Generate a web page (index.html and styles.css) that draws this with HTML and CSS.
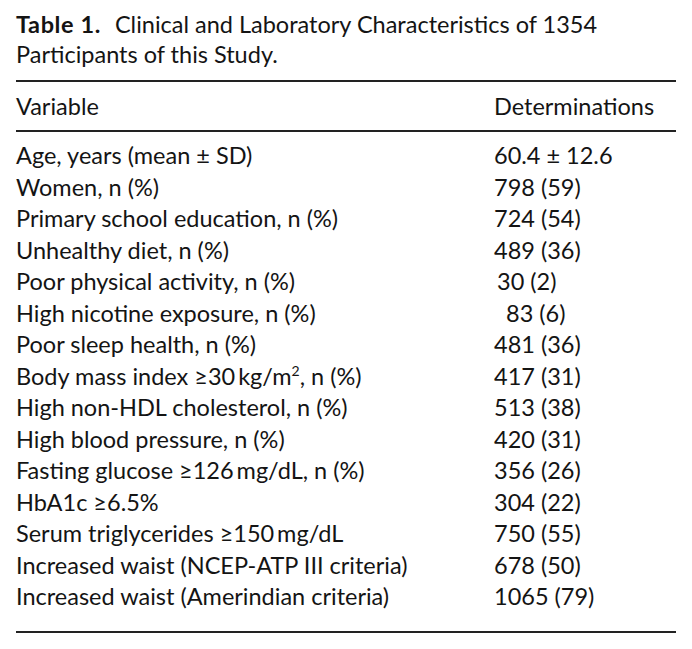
FILE: index.html
```html
<!DOCTYPE html>
<html>
<head>
<meta charset="utf-8">
<link rel="stylesheet" href="styles.css">
</head>
<body>
<div class="page">
  <div class="caption">
    <div class="cap-line"><b class="label">Table 1.</b><span>Clinical and Laboratory Characteristics of 1354</span></div>
    <div class="cap-line">Participants of this Study.</div>
  </div>
  <div class="head">
    <span>Variable</span>
    <span class="val">Determinations</span>
  </div>
  <div class="rows">
    <div class="row"><span>Age, years (mean ± SD)</span><span class="val">60.4 ± 12.6</span></div>
    <div class="row"><span>Women, n (%)</span><span class="val">798 (59)</span></div>
    <div class="row"><span>Primary school education, n (%)</span><span class="val">724 (54)</span></div>
    <div class="row"><span>Unhealthy diet, n (%)</span><span class="val">489 (36)</span></div>
    <div class="row"><span>Poor physical activity, n (%)</span><span class="val val-pad-s">30 (2)</span></div>
    <div class="row"><span>High nicotine exposure, n (%)</span><span class="val val-pad-l">83 (6)</span></div>
    <div class="row"><span>Poor sleep health, n (%)</span><span class="val">481 (36)</span></div>
    <div class="row"><span>Body mass index ≥30&#8201;kg/m<sup>2</sup>, n (%)</span><span class="val">417 (31)</span></div>
    <div class="row"><span>High non-HDL cholesterol, n (%)</span><span class="val">513 (38)</span></div>
    <div class="row"><span>High blood pressure, n (%)</span><span class="val">420 (31)</span></div>
    <div class="row"><span>Fasting glucose ≥126&#8201;mg/dL, n (%)</span><span class="val">356 (26)</span></div>
    <div class="row"><span>HbA1c ≥6.5%</span><span class="val">304 (22)</span></div>
    <div class="row"><span>Serum triglycerides ≥150&#8201;mg/dL</span><span class="val">750 (55)</span></div>
    <div class="row"><span>Increased waist (NCEP-ATP III criteria)</span><span class="val">678 (50)</span></div>
    <div class="row"><span>Increased waist (Amerindian criteria)</span><span class="val">1065 (79)</span></div>
  </div>
</div>
</body>
</html>
```

FILE: styles.css
```css
html, body {
  margin: 0;
  padding: 0;
  background: #ffffff;
}

.page {
  width: 660px;
  margin-left: 16px;
  font-family: Lato, "Open Sans", "DejaVu Sans", sans-serif;
  font-size: 23.5px;
  color: #141414;
}

.caption {
  padding-top: 9px;
  padding-bottom: 11px;
  line-height: 30px;
  border-bottom: 2px solid #222;
}

.cap-line {
  display: flex;
  white-space: nowrap;
}

.label {
  font-weight: 700;
  letter-spacing: 0.6px;
  margin-right: 14px;
}

.head {
  display: grid;
  grid-template-columns: 478px 1fr;
  line-height: 30px;
  padding: 9px 0 9px;
  border-bottom: 2px solid #222;
}

.rows {
  padding: 8px 0 18px;
  border-bottom: 2px solid #222;
}

.row {
  display: grid;
  grid-template-columns: 478px 1fr;
  line-height: 31.5px;
  height: 31.5px;
}

.val-pad-s {
  padding-left: 3px;
}

.val-pad-l {
  padding-left: 12px;
}

sup {
  font-size: 14px;
  line-height: 0;
  vertical-align: 9px;
}
```
